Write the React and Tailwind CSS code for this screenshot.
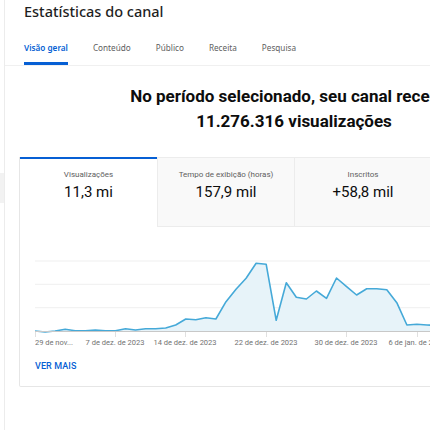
const points = [
  81, 82, 81, 79.3, 80.7, 80.7, 80, 80.7, 80.7, 78.7, 80, 78.7, 78.7, 78, 75, 69,
  69.7, 67.7, 69, 51.7, 39.3, 28.3, 13.3, 14.3, 70.3, 32.7, 47.3, 49, 41, 48.3, 28,
  36.7, 45, 38.7, 38.7, 39.7, 52.7, 75, 74.3, 75, 75.3, 75.5, 75.5, 75.5,
];

const ticks = [
  { x: 0, label: "29 de nov...", anchor: "start" },
  { x: 80, label: "7 de dez. de 2023", anchor: "middle" },
  { x: 150, label: "14 de dez. de 2023", anchor: "middle" },
  { x: 231, label: "22 de dez. de 2023", anchor: "middle" },
  { x: 311, label: "30 de dez. de 2023", anchor: "middle" },
  { x: 382, label: "6 de jan. de 2024", anchor: "middle" },
];

const tabs = ["Visão geral", "Conteúdo", "Público", "Receita", "Pesquisa"];

const metrics = [
  { label: "Visualizações", value: "11,3 mi" },
  { label: "Tempo de exibição (horas)", value: "157,9 mil" },
  { label: "Inscritos", value: "+58,8 mil" },
  { label: "Receita estimada", value: "US$ 0,00" },
];

function Chart() {
  const step = 10.05;
  const line = points.map((y, i) => `${(i * step).toFixed(1)},${y}`).join(" ");
  const area = `0,81 ${line} ${((points.length - 1) * step).toFixed(1)},81`;

  return (
    <svg width="520" height="100" className="block">
      {[11, 34.3, 57.7].map((y) => (
        <line key={y} x1="0" x2="520" y1={y} y2={y} stroke="#efefef" strokeWidth="1" />
      ))}
      <polygon points={area} fill="#e7f3f9" />
      <polyline points={line} fill="none" stroke="#45a9d8" strokeWidth="1.6" strokeLinejoin="round" />
      <line x1="0" x2="520" y1="81.5" y2="81.5" stroke="#c8c8c8" strokeWidth="1" />
      {ticks.map((t) => (
        <g key={t.label}>
          <line x1={t.x + 0.5} x2={t.x + 0.5} y1="82" y2="87" stroke="#e0e0e0" strokeWidth="1" />
          <text
            x={t.x}
            y="95"
            textAnchor={t.anchor}
            fontSize="7.5"
            fill="#727272"
            fontFamily="Roboto, 'Liberation Sans', sans-serif"
          >
            {t.label}
          </text>
        </g>
      ))}
    </svg>
  );
}

export default function App() {
  return (
    <div className="flex h-[430px] w-[430px] overflow-hidden bg-white font-['Roboto','Liberation_Sans',sans-serif] text-[#0d0d0d]">
      {/* sidebar edge */}
      <div className="w-[4px] shrink-0 border-r border-[#ececec] box-content">
        <div className="mt-[173px] h-[30px] bg-[#f2f2f2]" />
      </div>

      <div className="flex min-w-0 flex-1 flex-col">
        <h1 className="pl-[19px] pt-[1px] font-['Noto_Sans',sans-serif] text-[14.5px] leading-[20px] font-medium text-[#1f1f1f] whitespace-nowrap">
          Estatísticas do canal
        </h1>

        <div className="mt-[3px] flex gap-[25px] border-b border-[#f0f0f0] pl-[19px]">
          {tabs.map((t, i) => (
            <div
              key={t}
              className={[
                "pt-[18px] pb-[8px] border-b-[3px] font-['Noto_Sans',sans-serif] text-[8.2px] leading-[12px] whitespace-nowrap",
                i === 0
                  ? "border-[#065fd4] font-semibold text-[#065fd4]"
                  : "border-transparent text-[#606060]",
              ].join(" ")}
            >
              {t}
            </div>
          ))}
        </div>

        <div className="ml-[14px] w-[550px] shrink-0">
          <p className="mt-[18px] text-center text-[17px] font-bold leading-[25px] whitespace-nowrap">
            No período selecionado, seu canal recebeu
            <br />
            11.276.316 visualizações
          </p>

          <div className="mt-[23px] rounded-b-[2px] border-x border-b border-[#e6e6e6]">
            <div className="flex">
              {metrics.map((m, i) => (
                <div
                  key={m.label}
                  className={[
                    "flex h-[70px] w-[137px] flex-col items-center pt-[10px]",
                    i === 0
                      ? "border-t-2 border-[#065fd4] bg-white"
                      : "border-t border-b border-l border-[#ececec] bg-[#f9f9f9] pt-[11px]",
                  ].join(" ")}
                >
                  <span className="text-[8px] leading-[12px] text-[#606060] whitespace-nowrap">
                    {m.label}
                  </span>
                  <span className="mt-[2px] text-[15px] leading-[18px] whitespace-nowrap">
                    {m.value}
                  </span>
                </div>
              ))}
            </div>

            <div className="mt-[23px] pl-[15px]">
              <Chart />
            </div>

            <div className="mt-[2px] pb-[10px] pl-[15px]">
              <button
                type="button"
                className="text-[9px] font-medium leading-[14px] tracking-[0.1px] text-[#065fd4]"
              >
                VER MAIS
              </button>
            </div>
          </div>
        </div>
      </div>
    </div>
  );
}
